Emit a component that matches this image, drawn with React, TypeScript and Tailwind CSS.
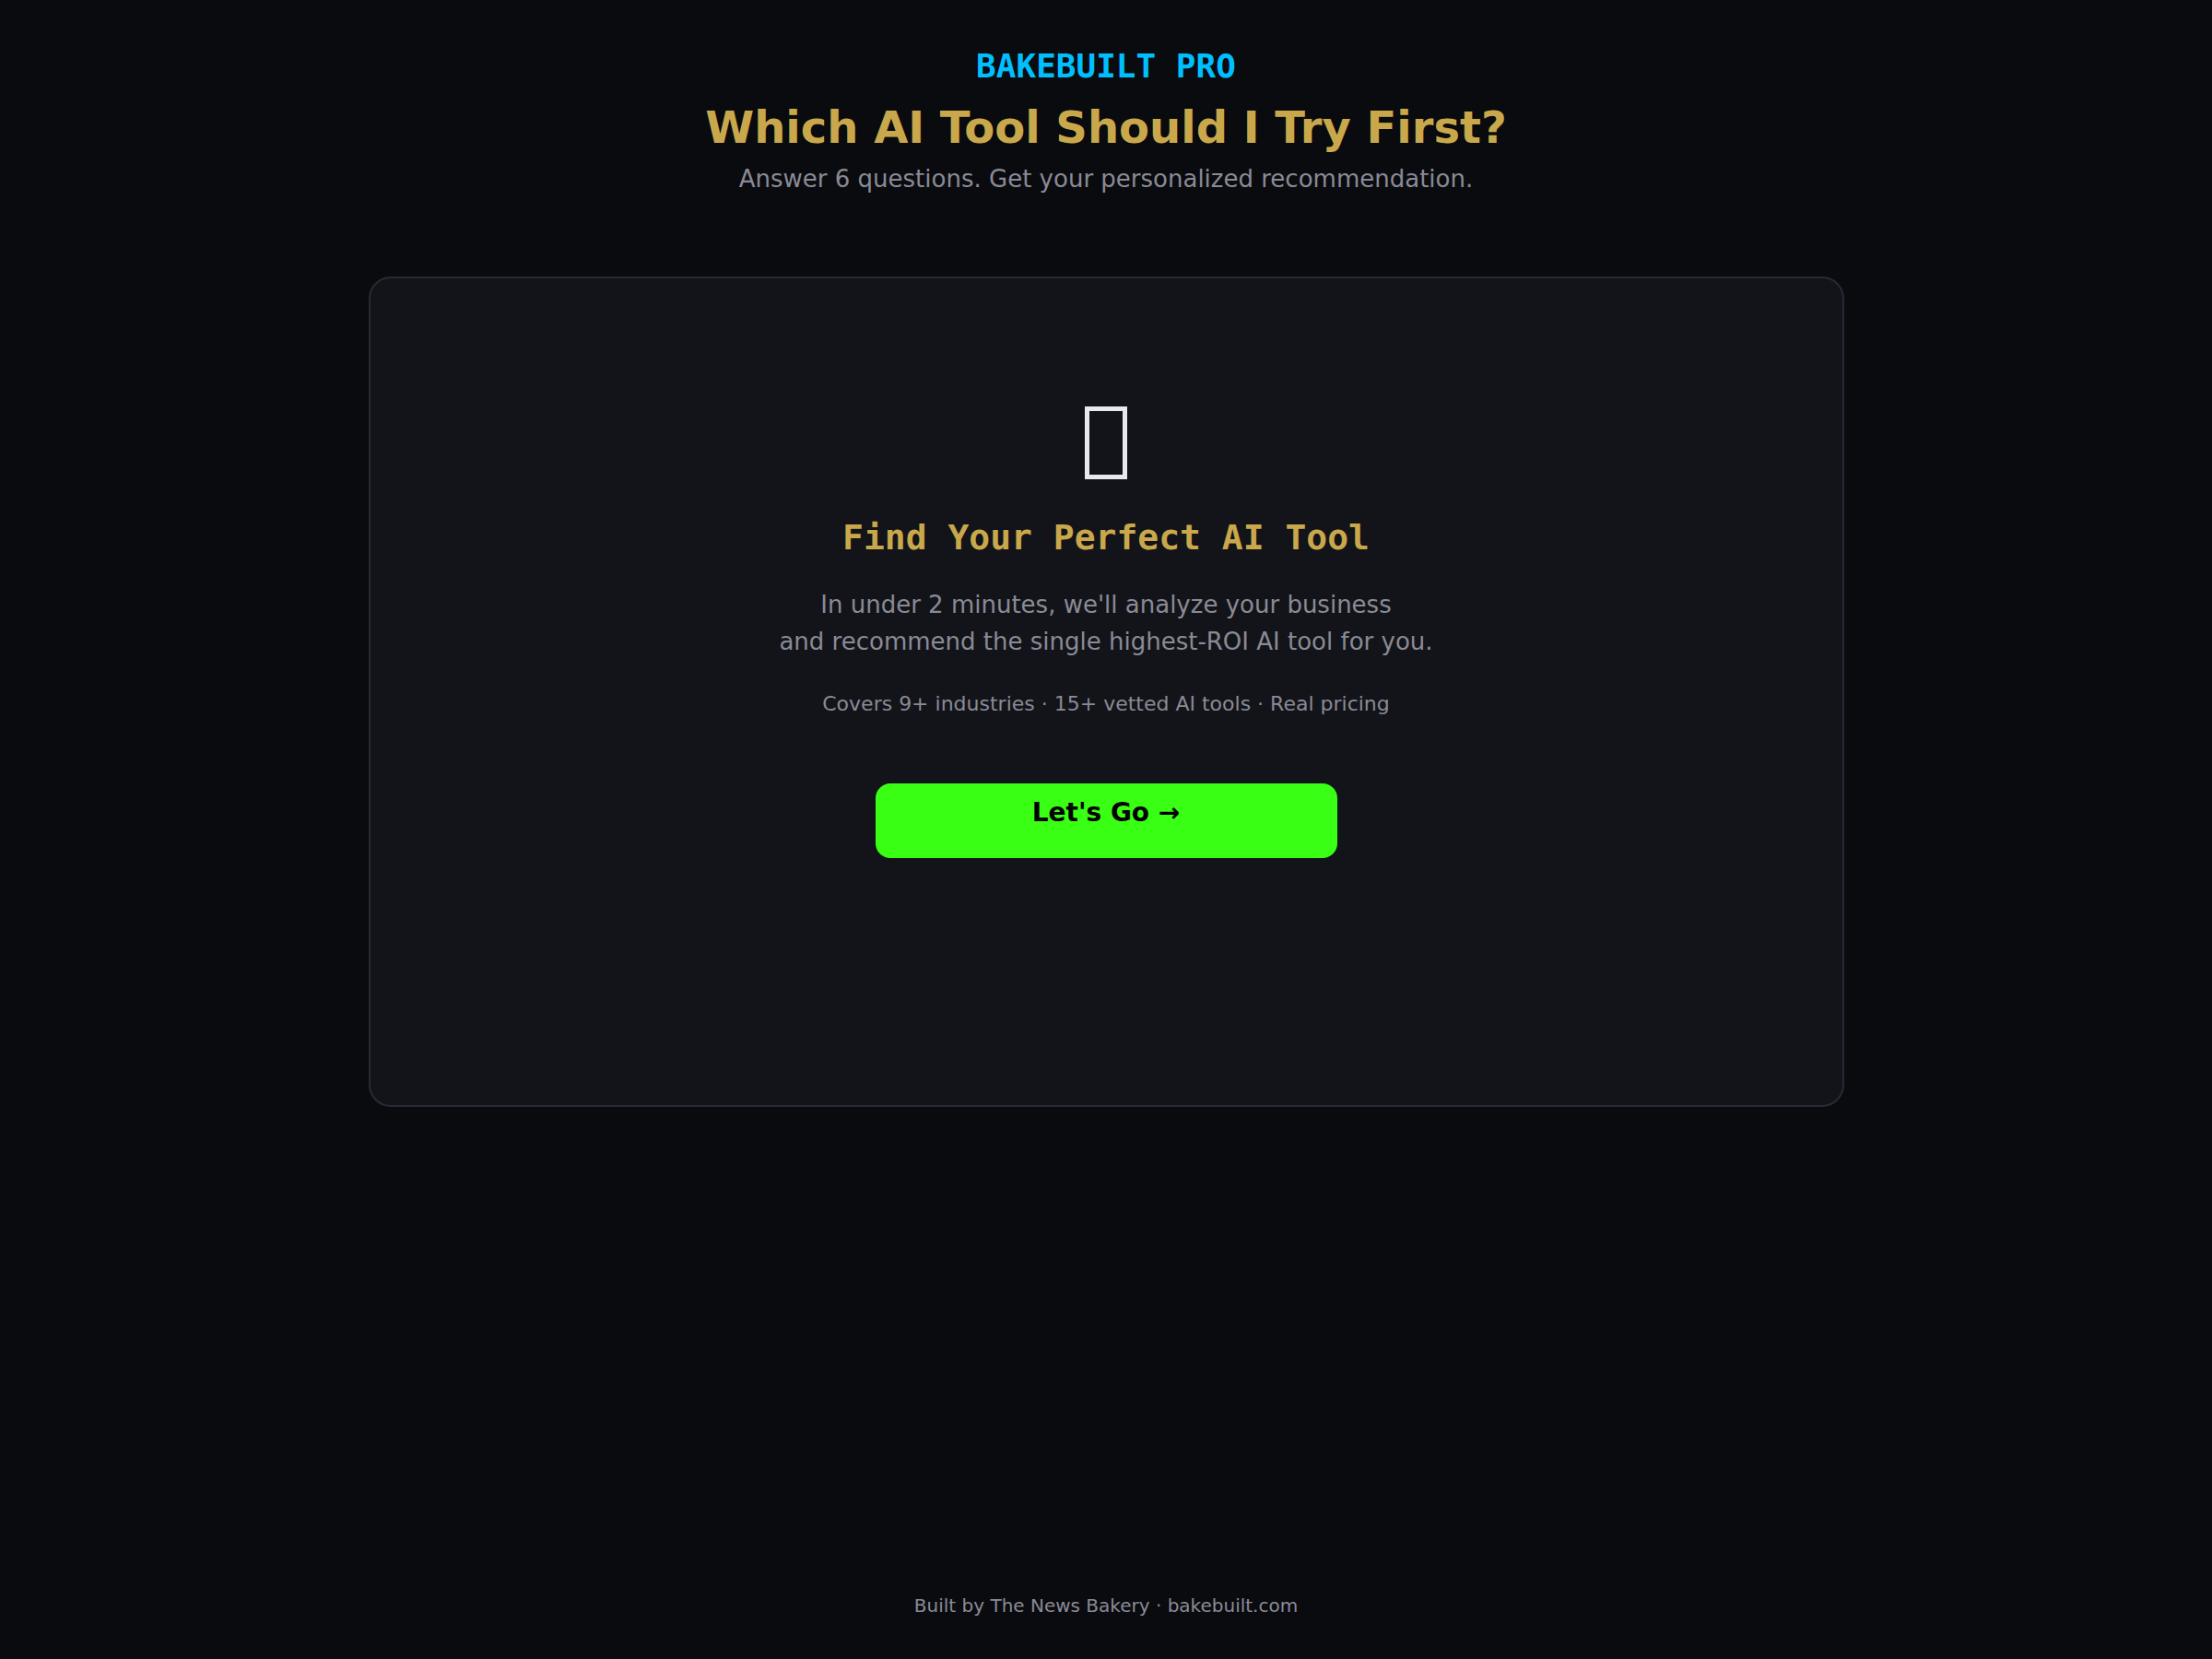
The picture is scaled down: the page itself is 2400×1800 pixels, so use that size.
export default function App() {
  return (
    <div className="flex min-h-screen flex-col items-center bg-[#0a0b0f] px-6 pt-[52px] pb-[42px] text-center font-['DejaVu_Sans',sans-serif] text-[#8a8a96]">

      {/* Header */}
      <header>
        <p className="font-['DejaVu_Sans_Mono',monospace] text-[36px] leading-[40px] font-bold text-[#00bfff]">BAKEBUILT PRO</p>
        <h1 className="mt-[18px] text-[48px] leading-[56px] font-bold text-[#c9a84c]">Which AI Tool Should I Try First?</h1>
        <p className="mt-2 text-[26px] leading-[40px]">Answer 6 questions. Get your personalized recommendation.</p>
      </header>

      {/* Intro card */}
      <main className="mt-[86px] flex w-full max-w-[1601px] flex-col items-center rounded-[24px] border-2 border-[#2a2a35] bg-[#131419] px-6 pt-[139px] pb-[268px]">
        <div className="h-[79px] w-[46px] border-5 border-[#e8e8ee]" aria-hidden="true" />
        <h2 className="mt-[39px] font-['DejaVu_Sans_Mono',monospace] text-[38px] leading-[48px] font-bold text-[#c9a84c]">Find Your Perfect AI Tool</h2>
        <p className="mt-[29px] text-[26px] leading-[40px]">
          In under 2 minutes, we'll analyze your business
          <br />
          and recommend the single highest-ROI AI tool for you.
        </p>
        <p className="mt-8 text-[22px] leading-[32px]">Covers 9+ industries · 15+ vetted AI tools · Real pricing</p>
        <button
          type="button"
          className="mt-[70px] w-full max-w-[501px] cursor-pointer rounded-[16px] bg-[#39ff14] pt-3 pb-[29px] text-[28px] leading-[40px] font-bold text-black"
        >
          Let's Go →
        </button>
      </main>

      {/* Footer */}
      <footer className="mt-auto text-[20px] leading-[32px]">Built by The News Bakery · bakebuilt.com</footer>
    </div>
  );
}
